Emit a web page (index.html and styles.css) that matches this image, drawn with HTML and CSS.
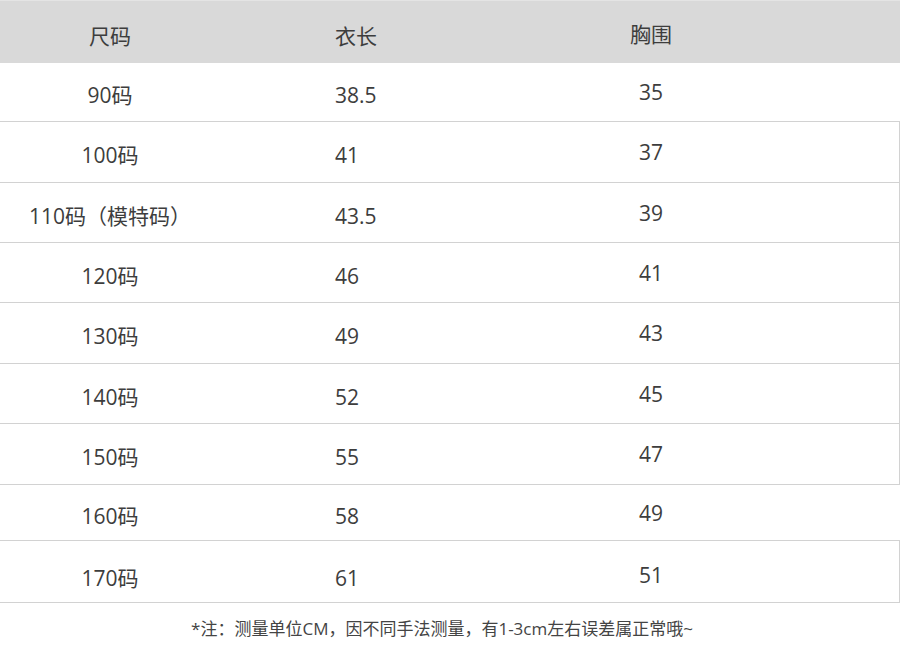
FILE: index.html
```html
<!DOCTYPE html>
<html lang="zh-CN">
<head>
<meta charset="utf-8">
<link rel="stylesheet" href="styles.css">
</head>
<body>
<div class="sheet">
  <div class="row head">
    <div class="c1">尺码</div><div class="c2">衣长</div><div class="c3">胸围</div>
  </div>
  <div class="row r58"><div class="c1">90码</div><div class="c2">38.5</div><div class="c3">35</div></div>
  <div class="row r60 edge"><div class="c1">100码</div><div class="c2">41</div><div class="c3">37</div></div>
  <div class="row r59 edge"><div class="c1">110码（模特码）</div><div class="c2">43.5</div><div class="c3">39</div></div>
  <div class="row r59 edge"><div class="c1">120码</div><div class="c2">46</div><div class="c3">41</div></div>
  <div class="row r60 edge"><div class="c1">130码</div><div class="c2">49</div><div class="c3">43</div></div>
  <div class="row r59 edge"><div class="c1">140码</div><div class="c2">52</div><div class="c3">45</div></div>
  <div class="row r60 edge"><div class="c1">150码</div><div class="c2">55</div><div class="c3">47</div></div>
  <div class="row r55"><div class="c1">160码</div><div class="c2">58</div><div class="c3">49</div></div>
  <div class="row r61 edge last"><div class="c1">170码</div><div class="c2">61</div><div class="c3">51</div></div>
  <p class="note">*注：测量单位CM，因不同手法测量，有1-3cm左右误差属正常哦~</p>
</div>
</body>
</html>
```
FILE: styles.css
```css
html, body {
  margin: 0;
  padding: 0;
  background: #ffffff;
}
body {
  font-family: "Open Sans", "Noto Sans CJK SC", sans-serif;
  color: #3d3d3d;
  width: 900px;
  height: 648px;
  overflow: hidden;
}
.sheet {
  display: flex;
  flex-direction: column;
}
.row {
  display: flex;
  align-items: center;
  font-size: 21px;
  line-height: 28px;
  border-bottom: 1px solid #d2d2d2;
  box-sizing: content-box;
}
.row.head {
  height: 62px;
  background: #d9d9d9;
  border-top: 1px solid #e4e4e4;
  border-bottom: none;
}
.r55 { height: 55px; }
.r58 { height: 58px; }
.r59 { height: 59px; }
.r60 { height: 60px; }
.r61 { height: 61px; }
.row.edge {
  border-right: 1px solid #d2d2d2;
  width: 899px;
}
.c1 {
  width: 220px;
  text-align: center;
  padding-top: 6px;
}
.c2 {
  width: 200px;
  padding-left: 115px;
  padding-top: 6px;
}
.c3 {
  width: 232px;
  text-align: center;
  padding-top: 0;
}
.last .c1, .last .c2 { padding-top: 12px; }
.last .c3 { padding-top: 6px; }
.head .c1, .head .c2 { padding-top: 7px; }
.head .c3 { padding-top: 3px; }
.note {
  margin: 0;
  padding-top: 12px;
  text-align: center;
  font-size: 17px;
  color: #444;
  padding-right: 16px;
}
```
